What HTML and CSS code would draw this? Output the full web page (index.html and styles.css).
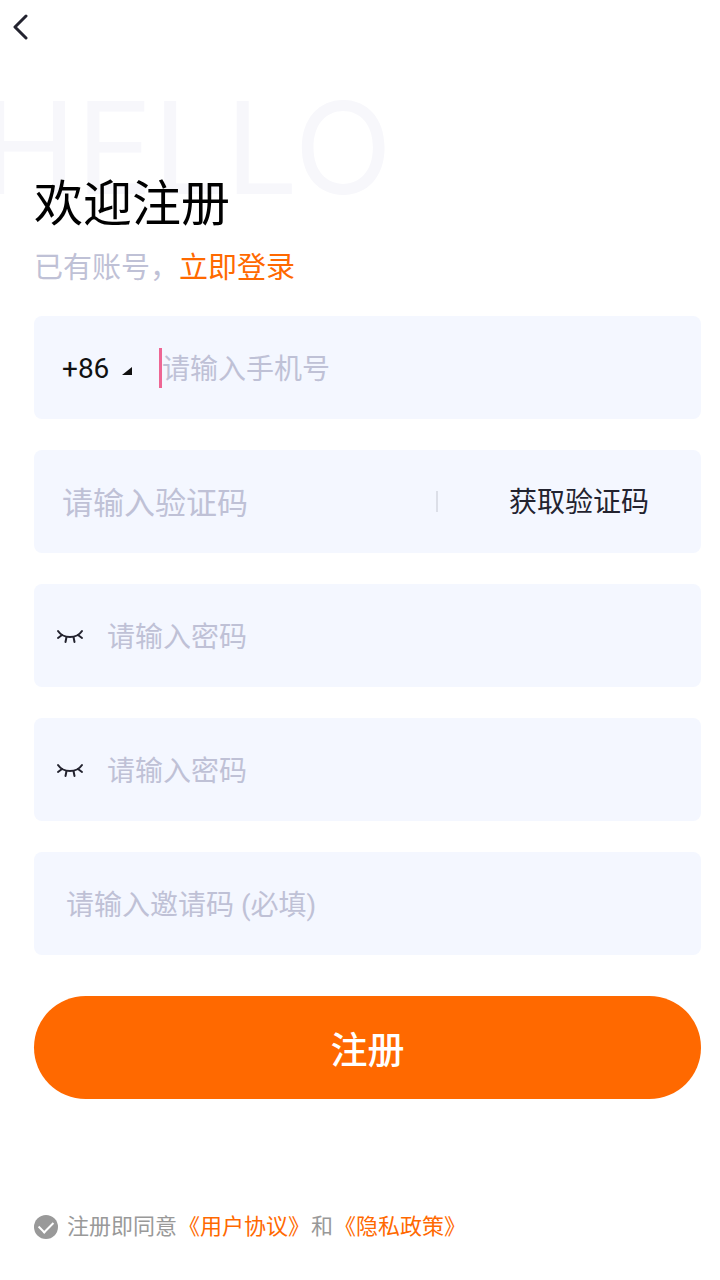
FILE: index.html
```html
<!DOCTYPE html>
<html lang="zh-CN">
<head>
    <meta charset="UTF-8">
    <meta name="viewport" content="width=device-width, initial-scale=1.0">
    <title>注册</title>
    <link rel="stylesheet" href="styles.css">
</head>
<body>

<!-- Top bar -->
<header class="topbar">
    <button type="button" class="back-btn" aria-label="返回">
        <svg width="16" height="28" viewBox="0 0 16 28" fill="none" stroke="#23232f" stroke-width="3" stroke-linecap="round" stroke-linejoin="round">
            <path d="M14 3 L3 14 L14 25"/>
        </svg>
    </button>
</header>

<main class="content">
    <!-- Title Section -->
    <div class="intro">
        <span class="hello" aria-hidden="true">HELLO</span>
        <h1>欢迎注册</h1>
        <p>已有账号，<a href="#login">立即登录</a></p>
    </div>

    <!-- Register Form -->
    <form class="register-form">
        <div class="field phone-field">
            <select class="area-code" aria-label="区号">
                <option>+86</option>
            </select>
            <svg class="area-arrow" width="10" height="8" viewBox="0 0 10 8"><path d="M10 0 V8 H0 Z" fill="#111"/></svg>
            <input type="tel" class="phone-input" placeholder="请输入手机号" aria-label="手机号">
        </div>

        <div class="field code-field">
            <input type="text" placeholder="请输入验证码" aria-label="验证码">
            <span class="divider"></span>
            <button type="button" class="code-btn">获取验证码</button>
        </div>

        <div class="field password-field">
            <button type="button" class="eye-btn" aria-label="显示密码">
                <svg width="28" height="18" viewBox="0 0 28 18" fill="none" stroke="#23232f" stroke-width="2" stroke-linecap="round">
                    <path d="M2 4 C4 7 8 10 14 10 C20 10 24 7 26 4"/>
                    <path d="M6 8 L2 11 M10.500 10 L9.500 15 M17.500 10 L18.500 15 M22 8 L26 11"/>
                </svg>
            </button>
            <input type="password" placeholder="请输入密码" aria-label="密码">
        </div>

        <div class="field password-field">
            <button type="button" class="eye-btn" aria-label="显示密码">
                <svg width="28" height="18" viewBox="0 0 28 18" fill="none" stroke="#23232f" stroke-width="2" stroke-linecap="round">
                    <path d="M2 4 C4 7 8 10 14 10 C20 10 24 7 26 4"/>
                    <path d="M6 8 L2 11 M10.500 10 L9.500 15 M17.500 10 L18.500 15 M22 8 L26 11"/>
                </svg>
            </button>
            <input type="password" placeholder="请输入密码" aria-label="确认密码">
        </div>

        <div class="field invite-field">
            <input type="text" placeholder="请输入邀请码 (必填)" aria-label="邀请码">
        </div>

        <button type="submit" class="submit-btn">注册</button>

        <div class="agreement">
            <input type="checkbox" id="agree" checked>
            <label for="agree">注册即同意</label>
            <a href="#terms">《用户协议》</a>
            <span>和</span>
            <a href="#privacy">《隐私政策》</a>
        </div>
    </form>
</main>

</body>
</html>
```
FILE: styles.css
```css
* {
    margin: 0;
    padding: 0;
    box-sizing: border-box;
}
body {
    font-family: Roboto, "Noto Sans CJK SC", sans-serif;
    background-color: #fff;
    color: #111;
    overflow-x: hidden;
}
a {
    color: #ff6900;
    text-decoration: none;
}
button,
input,
select {
    font-family: inherit;
    font-size: 28px;
    border: none;
    background: none;
    outline: none;
}
button {
    cursor: pointer;
}
.topbar {
    height: 54px;
    padding: 0 12px;
    display: flex;
    align-items: center;
}
.back-btn {
    display: flex;
}
.content {
    padding: 0 19px 32px 34px;
}
.intro {
    position: relative;
    padding-top: 115px;
}
/* Oversized word behind the title, runs off the left edge */
.hello {
    position: absolute;
    top: 30px;
    left: -53px;
    z-index: -1;
    font-family: Inter, sans-serif;
    font-size: 128px;
    line-height: 128px;
    color: #f7f7fb;
}
.intro h1 {
    font-size: 49px;
    font-weight: 400;
    line-height: 72px;
    color: #000;
}
.intro p {
    margin-top: 6px;
    font-size: 29px;
    line-height: 42px;
    color: #bfc1d6;
}
.register-form {
    display: flex;
    flex-direction: column;
    gap: 31px;
    margin-top: 27px;
}
.field {
    height: 103px;
    display: flex;
    align-items: center;
    background-color: #f4f7ff;
    border-radius: 8px;
}
.field input {
    flex: 1;
    min-width: 0;
    height: 40px;
    padding-top: 3px;
    color: #23232f;
}
.field input::placeholder {
    color: #bfc1d6;
    opacity: 1;
}
.phone-field {
    padding: 0 28px;
}
.area-code {
    appearance: none;
    padding-top: 2px;
    color: #111;
}
.area-arrow {
    margin: 6px 27px 0 12px;
}
.field .phone-input {
    border-left: 3px solid #ee6694;
}
.code-field {
    padding-left: 28px;
}
.code-field input {
    font-size: 31px;
}
.divider {
    width: 2px;
    height: 21px;
    background-color: #dcdfe8;
}
.code-btn {
    padding: 3px 52px 0 71px;
    line-height: 42px;
    color: #23232f;
}
.password-field {
    padding: 0 28px 0 22px;
}
.eye-btn {
    display: flex;
    margin-right: 23px;
}
.invite-field {
    padding: 0 32px;
}
.submit-btn {
    height: 103px;
    margin-top: 10px;
    border-radius: 52px;
    background-color: #ff6900;
    color: #fff;
    font-size: 37px;
    font-weight: 500;
}
.agreement {
    display: flex;
    align-items: center;
    gap: 1px;
    margin-top: 80px;
    font-size: 22px;
    line-height: 34px;
    color: #999;
}
.agreement input {
    appearance: none;
    width: 24px;
    height: 24px;
    margin-right: 8px;
    display: flex;
    align-items: center;
    justify-content: center;
    border-radius: 50%;
    background-color: #999;
}
.agreement input:checked::after {
    content: "";
    width: 12px;
    height: 7px;
    margin-bottom: 4px;
    border-left: 2px solid #fff;
    border-bottom: 2px solid #fff;
    transform: rotate(-45deg);
}
```
